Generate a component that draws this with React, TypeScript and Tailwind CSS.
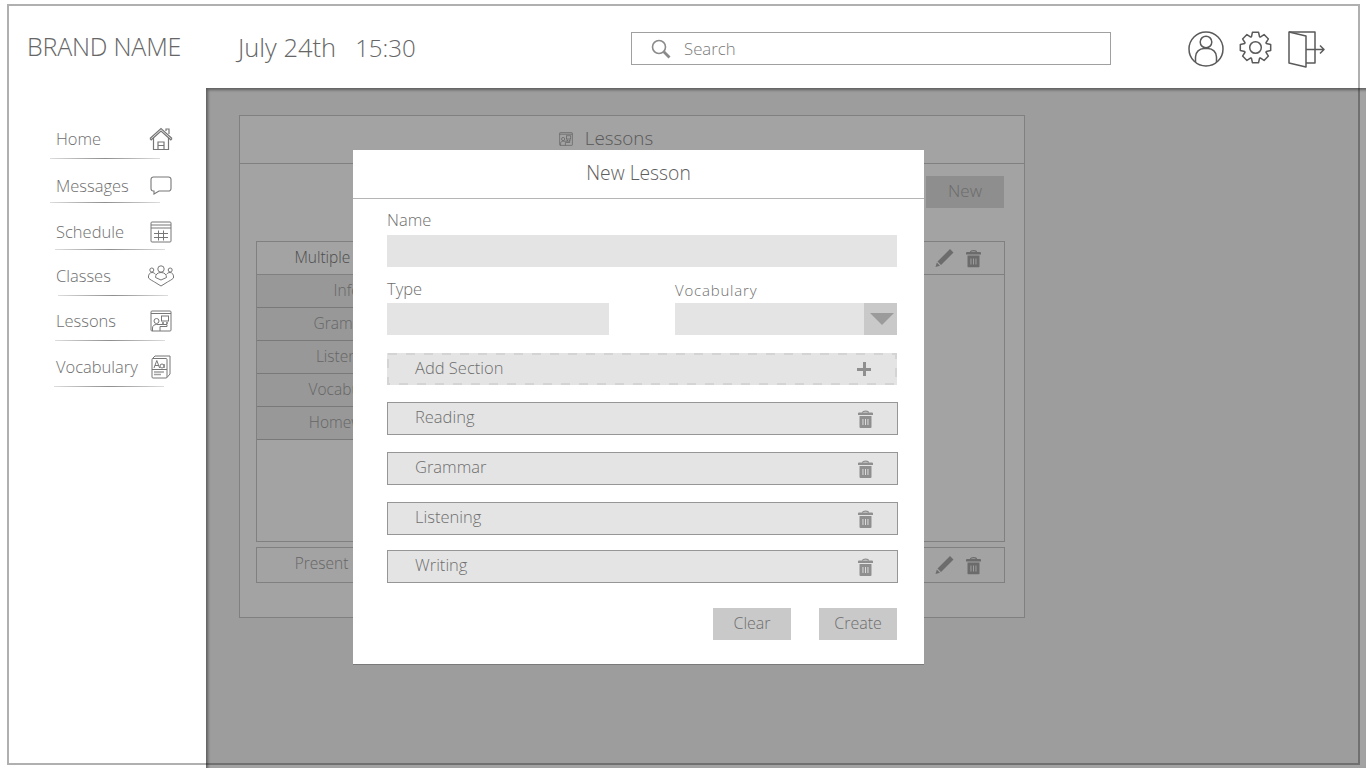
import React from "react";

const navItems = [
  { label: "Home", icon: <HomeIcon />, h: "h-[47px]", gap: "mt-[9px]", ml: "-ml-[6px]" },
  { label: "Messages", icon: <ChatIcon />, h: "h-[46px]", gap: "mt-[6px]", ml: "-ml-[6px]" },
  { label: "Schedule", icon: <CalendarIcon />, h: "h-[44px]", gap: "mt-[7px]", ml: "-ml-[1px]" },
  { label: "Classes", icon: <GroupIcon />, h: "h-[45px]", gap: "mt-[9px]", ml: "ml-[2px]" },
  { label: "Lessons", icon: <LessonIcon />, h: "h-[46px]", gap: "mt-[9px]", ml: "-ml-[1px]" },
  { label: "Vocabulary", icon: <BookIcon />, h: "h-[46px]", gap: "mt-[9px]", ml: "-ml-[2px]" },
];

const sections = ["Reading", "Grammar", "Listening", "Writing"];
const sectionGaps = ["mt-[17px]", "mt-[17px]", "mt-[17px]", "mt-[15px]"];
const lessonRows = ["Info", "Grammar", "Listening", "Vocabulary", "Homework"];

// 8 tooth cog outline, centre 16.5/16.5
function gearPath() {
  const pts: string[] = [];
  for (let i = 0; i < 8; i++) {
    const a = (i * Math.PI) / 4 - Math.PI / 2;
    const at = (r: number, d: number) =>
      `${(16.5 + r * Math.cos(a + d)).toFixed(2)} ${(16.5 + r * Math.sin(a + d)).toFixed(2)}`;
    pts.push(at(11.5, -0.36), at(15.5, -0.2), at(15.5, 0.2), at(11.5, 0.36));
  }
  return `M${pts.join("L")}Z`;
}

function HomeIcon() {
  return (
    <svg width="24" height="24" viewBox="0 0 24 24" fill="none" stroke="#777777" strokeWidth="1.200">
      <path d="M1 11.500 12 1.500l11 10" />
      <path d="M1 11.500l1.200 1.300L12 4l9.800 8.800 1.200-1.300" />
      <path d="M17 4V2h3v5" />
      <path d="M4.500 11v11.500h15V11" />
      <path d="M9 22.500V15h6v7.500M9 18.500h6" />
    </svg>
  );
}

function ChatIcon() {
  return (
    <svg width="22" height="20" viewBox="0 0 22 20" fill="none" stroke="#777777" strokeWidth="1.100">
      <path d="M3.500 1h15A2.500 2.500 0 0 1 21 3.500v9a2.500 2.500 0 0 1-2.500 2.500H9l-5 3v-3h-.5A2.500 2.500 0 0 1 1 12.500v-9A2.500 2.500 0 0 1 3.500 1Z" />
    </svg>
  );
}

function CalendarIcon() {
  return (
    <svg width="22" height="22" viewBox="0 0 22 22" fill="none" stroke="#777777" strokeWidth="1">
      <rect x="1" y="1" width="20" height="20" rx="1" />
      <path d="M1 4h20M1 7h20M4 12.500h14M4 16.500h14M8.500 9.500v10M13.500 9.500v10" />
    </svg>
  );
}

function GroupIcon() {
  return (
    <svg width="28" height="22" viewBox="0 0 28 22" fill="none" stroke="#777777" strokeWidth="1">
      <circle cx="14" cy="4" r="3.200" />
      <circle cx="4.800" cy="5" r="2" />
      <circle cx="23.200" cy="5" r="2" />
      <path d="M8.500 12.500c0-3 2-5 5.500-5s5.500 2 5.500 5" />
      <path d="M1.500 13c-.5-3 1-5.500 3.500-5.500 1.500 0 2.500.5 3.500 2M26.500 13c.5-3-1-5.500-3.500-5.500-1.500 0-2.500.5-3.500 2" />
      <path d="M1.500 13c2 2 4.500 3 6 4l6.500 4 6.500-4c1.500-1 4-2 6-4" />
      <path d="M8.500 12.500 14 15l5.500-2.500" />
    </svg>
  );
}

function LessonIcon({ size = 22, color = "#777777" }: { size?: number; color?: string }) {
  return (
    <svg width={size} height={size} viewBox="0 0 22 22" fill="none" stroke={color} strokeWidth="1">
      <rect x="1" y="1" width="20" height="20" rx="1" />
      <path d="M1 3.500h20" />
      <rect x="11.500" y="6" width="7" height="5" />
      <path d="M12 13h2M16 13h2" strokeWidth="1.500" />
      <circle cx="6.500" cy="11" r="2.500" />
      <path d="M2.500 21v-3c0-2.500 2-3.500 4-3.500h10.500v2H10V21" />
    </svg>
  );
}

function BookIcon() {
  return (
    <svg width="20" height="24" viewBox="0 0 20 24" fill="none" stroke="#777777" strokeWidth="1">
      <path d="M1.500 3.500 4 1h15v18l-3 3.500" />
      <rect x="1" y="3.500" width="15" height="19.500" rx="1" />
      <path d="M3 13 5.800 5.500 8.600 13M4 10.500h3.600" />
      <circle cx="11" cy="11" r="2" />
      <path d="M13.200 9v4" />
      <path d="M1 14.500h15" />
      <path d="M3 17h10M3 19.500h7" strokeWidth="1.300" stroke="#a0a0a0" />
    </svg>
  );
}

function SearchIcon() {
  return (
    <svg width="20" height="20" viewBox="0 0 20 20" fill="none" stroke="#8a8a8a">
      <circle cx="8" cy="8" r="6.500" strokeWidth="1.600" />
      <path d="M12.800 12.800 18.500 18.500" strokeWidth="2.800" />
    </svg>
  );
}

function UserIcon() {
  return (
    <svg width="36" height="36" viewBox="0 0 36 36" fill="none" stroke="#5a5a5a" strokeWidth="1.500">
      <circle cx="18" cy="18" r="17" />
      <circle cx="18" cy="11" r="5.800" />
      <path d="M7.500 31v-5c0-5 4-8.500 8.500-8.500h4c4.500 0 8.500 3.500 8.500 8.500v5" />
    </svg>
  );
}

function GearIcon() {
  return (
    <svg width="33" height="33" viewBox="0 0 33 33" fill="none" stroke="#5a5a5a" strokeWidth="1.500" strokeLinejoin="round">
      <circle cx="16.500" cy="16.500" r="5.800" />
      <path d={gearPath()} />
    </svg>
  );
}

function ExitIcon() {
  return (
    <svg width="38" height="37" viewBox="0 0 38 37" fill="none" stroke="#5a5a5a" strokeWidth="1.500" strokeLinejoin="round">
      <path d="M1 1h26v31h-9" />
      <path d="M1 1l17 4v31L1 32Z" />
      <path d="M18 18.500h18M32 14.500l4 4-4 4" />
    </svg>
  );
}

function TrashIcon({ className }: { className: string }) {
  return (
    <svg width="15" height="18" viewBox="0 0 15 18" className={className}>
      <path fill="none" stroke="currentColor" strokeWidth="1.200" d="M4.500 2.800C4.500.6 10.500.6 10.500 2.800" />
      <path fill="currentColor" d="M1 2.500h13a1 1 0 0 1 1 1V5H0V3.500a1 1 0 0 1 1-1Z" />
      <path
        fill="currentColor"
        fillRule="evenodd"
        d="M1.500 6h12v11a1 1 0 0 1-1 1h-10a1 1 0 0 1-1-1ZM4.500 9v6h.9V9Zm2.500 0v6h.9V9Zm2.500 0v6h.9V9Z"
      />
    </svg>
  );
}

function PencilIcon() {
  return (
    <svg width="19" height="19" viewBox="0 0 19 19" className="text-[#aaaaaa]">
      <path fill="currentColor" d="M15 .5 18.500 4 6 16.500 2.500 13ZM1.800 14 5 17.200.5 18.500Z" />
    </svg>
  );
}

function RowActions() {
  return (
    <div className="absolute right-[23px] top-1/2 flex -translate-y-1/2 items-center gap-[12px]">
      <PencilIcon />
      <TrashIcon className="text-[#a8a8a8]" />
    </div>
  );
}

export default function App() {
  return (
    <div
      className="relative h-[768px] w-[1366px] overflow-hidden bg-white pl-[7px] pt-[4px] text-[#6e6e6e]"
      style={{ fontFamily: '"Open Sans", sans-serif' }}
    >
      {/* Page frame */}
      <div className="flex h-[761px] w-[1353px] flex-col border-2 border-[#b0b0b0]">
        {/* Top bar */}
        <header className="flex h-[82px] shrink-0 items-center">
          <div className="ml-[18px] w-[211px] text-[25px] font-light tracking-[-0.2px] text-[#666666]">BRAND NAME</div>
          <div className="flex w-[393px] items-baseline font-light text-[#666666]">
            <span className="text-[25.500px]">July 24th</span>
            <span className="ml-[19px] text-[24px]">15:30</span>
          </div>
          <div className="mt-[3px] flex h-[33px] w-[480px] items-center border border-[#a0a0a0] pl-[19px]">
            <SearchIcon />
            <span className="ml-[13px] text-[16.800px] font-light text-[#7a7a7a]">Search</span>
          </div>
          <div className="ml-[77px] mt-[5px] flex items-start">
            <UserIcon />
            <div className="ml-[15px]">
              <GearIcon />
            </div>
            <div className="ml-[16px]">
              <ExitIcon />
            </div>
          </div>
        </header>

        <div className="flex min-h-0 flex-1">
          {/* Sidebar */}
          <nav className="w-[197px] shrink-0 pl-[47px] pt-[41px]">
            {navItems.map((item) => (
              <div key={item.label} className={`w-[119px] ${item.h}`}>
                <div className="flex h-[20px] items-center justify-between">
                  <span className="text-[16.500px] font-light">{item.label}</span>
                  <span className="flex w-[28px] justify-center">{item.icon}</span>
                </div>
                <div
                  className={`h-[1px] w-[110px] bg-linear-to-r from-[#dddddd] via-[#8f8f8f] to-[#dddddd] ${item.gap} ${item.ml}`}
                />
              </div>
            ))}
          </nav>

          {/* Lessons page behind the dialog */}
          <main className="flex-1 bg-[#f6f6f6] pl-[33px] pt-[27px]">
            <div className="h-[503px] w-[786px] border border-[#c9c9c9] bg-white">
              <div className="flex h-[48px] items-center justify-center gap-[12px] border-b border-[#c9c9c9] pb-[2px] pr-[52px] text-[18.800px] font-light text-[#8c8c8c]">
                <LessonIcon size={14} color="#8c8c8c" />
                <span>Lessons</span>
              </div>
              <div className="flex justify-end pr-[20px] pt-[12px]">
                <div className="flex h-[32px] w-[78px] items-center justify-center bg-[#dedede] pb-[2px] text-[17px] font-light text-[#a8a8a8]">New</div>
              </div>
              <div className="ml-[16px] mt-[33px] w-[749px]">
                <div className="relative flex h-[34px] items-center border border-[#c9c9c9]">
                  <span className="w-[182px] text-center text-[15.500px] font-light text-[#787878]">Multiple Choice</span>
                  <RowActions />
                </div>
                <div className="h-[267px] border border-t-0 border-[#c9c9c9]">
                  {lessonRows.map((row) => (
                    <div
                      key={row}
                      className="flex h-[33px] w-[200px] items-center justify-center border-b border-[#bdbdbd] bg-[#eeeeee] pr-[20px] text-[15.500px] font-light text-[#a0a0a0]"
                    >
                      {row}
                    </div>
                  ))}
                </div>
                <div className="relative mt-[5px] flex h-[36px] items-center border border-[#c9c9c9] pb-[3px]">
                  <span className="w-[180px] text-center text-[15.500px] font-light text-[#a0a0a0]">Present Simple</span>
                  <RowActions />
                </div>
              </div>
            </div>
          </main>
        </div>
      </div>

      {/* Dim layer */}
      <div className="absolute bottom-0 left-[206px] right-0 top-[88px] bg-black/36 shadow-[inset_2px_2px_3px_rgba(0,0,0,0.4)]" />

      {/* New Lesson dialog */}
      <div className="absolute left-[353px] top-[150px] h-[514px] w-[571px] bg-white shadow-[0_1px_0_#7a7a7a]">
        <div className="flex h-[49px] items-center justify-center border-b border-[#b5b5b5] pb-[2px] text-[19.300px] font-light text-[#5e5e5e]">
          New Lesson
        </div>
        <div className="pl-[34px] pr-[27px] pt-[9px]">
          <div className="h-[27px] text-[16.500px] font-light leading-[24px]">Name</div>
          <div className="h-[32px] bg-[#e4e4e4]" />

          <div className="mt-[8px] flex justify-between">
            <div className="w-[222px]">
              <div className="h-[28px] text-[16.500px] font-light leading-[28px]">Type</div>
              <div className="h-[32px] bg-[#e4e4e4]" />
            </div>
            <div className="w-[222px]">
              <div className="h-[28px] text-[15px] font-light leading-[30px] tracking-[0.800px]">Vocabulary</div>
              <div className="flex h-[32px] justify-end bg-[#e4e4e4]">
                <div className="flex w-[33px] items-center justify-center bg-[#c9c9c9] pl-[2px]">
                  <div className="h-0 w-0 border-x-[12px] border-t-[12px] border-x-transparent border-t-[#9b9b9b]" />
                </div>
              </div>
            </div>
          </div>

          <div className="relative mt-[18px] flex h-[32px] items-center justify-between bg-[#e4e4e4] pb-[2px] pl-[28px] pr-[26px]">
            <svg className="absolute inset-0 h-full w-full" fill="none">
              <rect x="1" y="1" width="508" height="30" stroke="#d4d4d4" strokeWidth="2" strokeDasharray="9 9" />
            </svg>
            <span className="text-[16.500px] font-light">Add Section</span>
            <span className="relative mt-[2px] h-[14px] w-[14px]">
              <span className="absolute left-[5.500px] top-0 h-[14px] w-[3px] bg-[#8f8f8f]" />
              <span className="absolute left-0 top-[5.500px] h-[3px] w-[14px] bg-[#8f8f8f]" />
            </span>
          </div>

          {sections.map((section, i) => (
            <div
              key={section}
              className={`-mr-[1px] flex h-[33px] items-center justify-between border border-[#969696] bg-[#e4e4e4] pl-[27px] pr-[24px] ${sectionGaps[i]}`}
            >
              <span className="pb-[3px] text-[16.500px] font-light">{section}</span>
              <TrashIcon className="text-[#8f8f8f]" />
            </div>
          ))}

          <div className="mt-[25px] flex justify-end gap-[28px]">
            <div className="flex h-[32px] w-[78px] items-center justify-center bg-[#c9c9c9] pb-[2px] text-[16px] font-light">Clear</div>
            <div className="flex h-[32px] w-[78px] items-center justify-center bg-[#c9c9c9] pb-[2px] text-[16px] font-light">Create</div>
          </div>
        </div>
      </div>
    </div>
  );
}
